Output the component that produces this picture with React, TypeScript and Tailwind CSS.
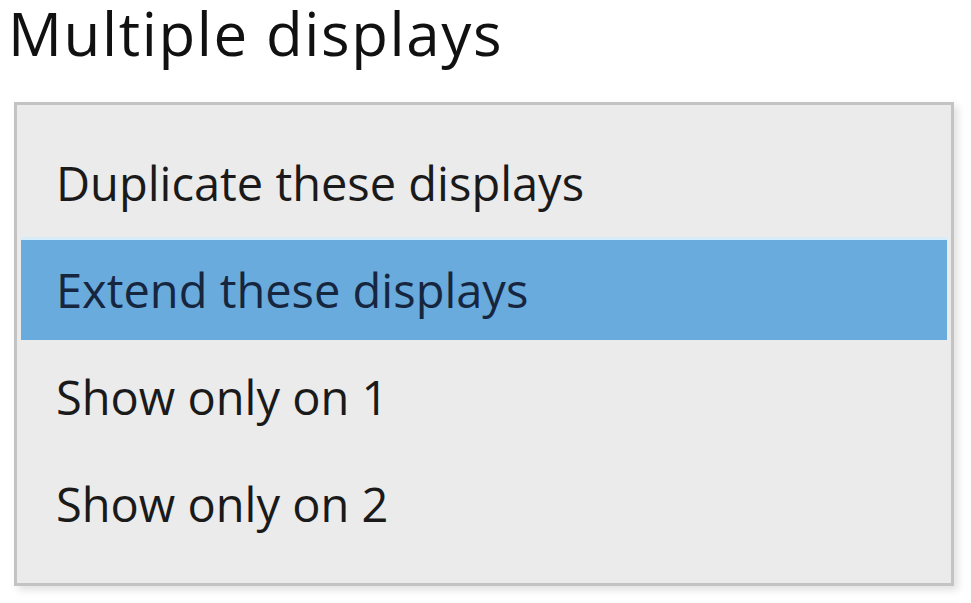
import React from 'react'

const options = [
  'Duplicate these displays',
  'Extend these displays',
  'Show only on 1',
  'Show only on 2',
]

export default function App() {
  const selected = 1

  return (
    <div className="w-[971px] h-[603px] bg-white overflow-hidden" style={{ fontFamily: '"Open Sans", "Noto Sans", sans-serif' }}>
      <div className="h-[102px] pl-[8px]">
        <h1 className="text-[60px] leading-[66px] tracking-[1.6px] font-normal text-[#111111]">Multiple displays</h1>
      </div>
      <div className="ml-[14px] w-[940px] h-[484px] border-[3px] border-[#c3c3c3] bg-[#ebebeb] shadow-[4px_4px_8px_rgba(0,0,0,0.12)]">
        <ul className="flex flex-col gap-[7px] px-[4px] pt-[28px] pb-[30px]">
          {options.map((opt, i) => (
            <li
              key={opt}
              className={
                i === selected
                  ? 'h-[100px] flex items-center pl-[35px] bg-[#6aabdd] text-[#17263f] shadow-[0_-3px_0_#d6ecf8]'
                  : 'h-[100px] flex items-center pl-[35px] text-[#1a1a1a]'
              }
            >
              <span className="text-[47px] leading-[64px]">{opt}</span>
            </li>
          ))}
        </ul>
      </div>
    </div>
  )
}
